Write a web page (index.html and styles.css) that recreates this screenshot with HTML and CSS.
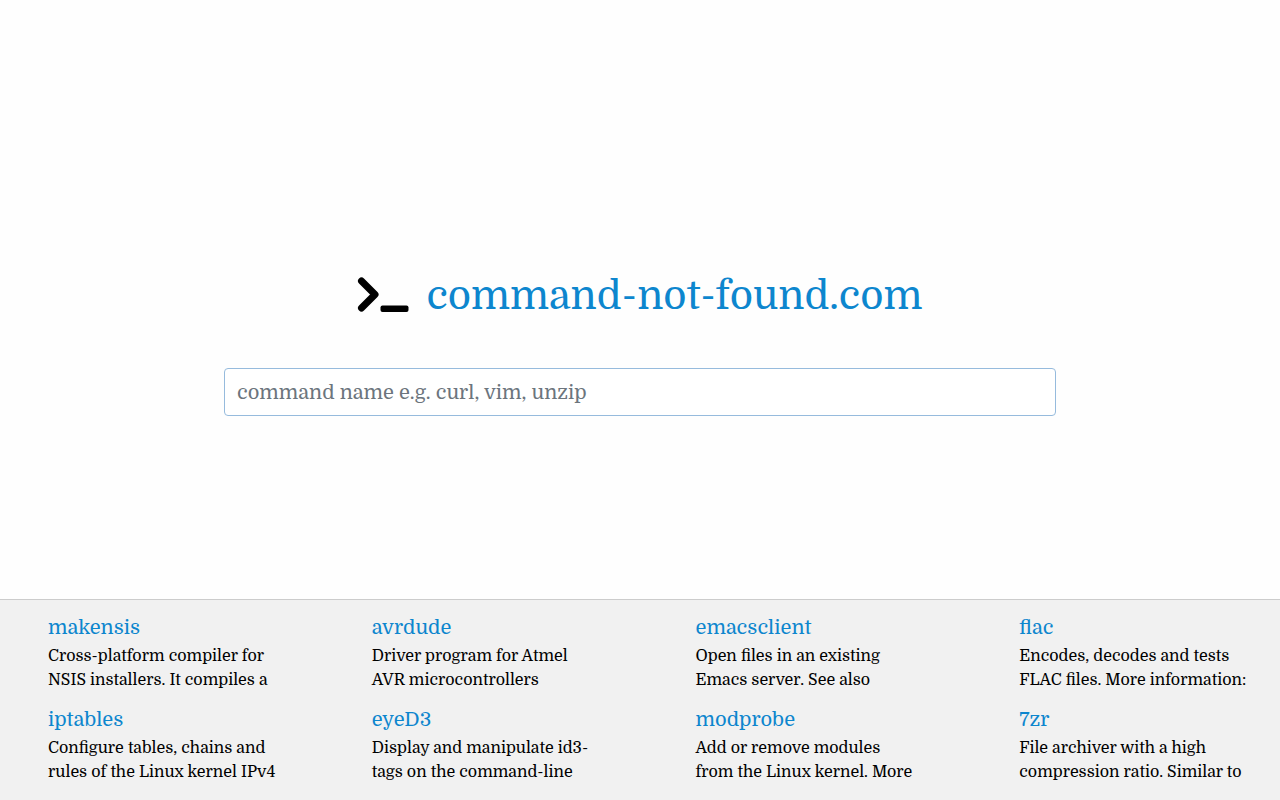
FILE: index.html
```html
<!DOCTYPE html>
<html lang="en">
<head>
<meta charset="utf-8">
<meta name="viewport" content="width=device-width, initial-scale=1">
<title>command-not-found.com</title>
<link rel="stylesheet" href="styles.css">
</head>
<body>
<main class="hero">
  <h1 class="brand">
    <svg class="brand-icon" viewBox="0 0 52 40" aria-hidden="true">
      <path d="M4.500 5L18 18.500L4.500 32" fill="none" stroke="#000" stroke-width="7" stroke-linecap="round" stroke-linejoin="round"/>
      <rect x="23.500" y="29.500" width="28" height="6.500" rx="2" fill="#000"/>
    </svg>
    <a class="brand-link" href="#">command-not-found.com</a>
  </h1>
  <form class="search">
    <input class="search-input" type="text" aria-label="Command name" placeholder="command name e.g. curl, vim, unzip">
  </form>
</main>
<footer class="commands">
  <article class="command"><h2 class="command-name"><a href="#">makensis</a></h2><p class="command-text">Cross-platform compiler for NSIS installers. It compiles a</p></article>
  <article class="command"><h2 class="command-name"><a href="#">avrdude</a></h2><p class="command-text">Driver program for Atmel AVR microcontrollers</p></article>
  <article class="command"><h2 class="command-name"><a href="#">emacsclient</a></h2><p class="command-text">Open files in an existing Emacs server. See also</p></article>
  <article class="command"><h2 class="command-name"><a href="#">flac</a></h2><p class="command-text">Encodes, decodes and tests FLAC files. More information:</p></article>
  <article class="command"><h2 class="command-name"><a href="#">iptables</a></h2><p class="command-text">Configure tables, chains and rules of the Linux kernel IPv4</p></article>
  <article class="command"><h2 class="command-name"><a href="#">eyeD3</a></h2><p class="command-text">Display and manipulate id3-tags on the command-line</p></article>
  <article class="command"><h2 class="command-name"><a href="#">modprobe</a></h2><p class="command-text">Add or remove modules<br>from the Linux kernel. More</p></article>
  <article class="command"><h2 class="command-name"><a href="#">7zr</a></h2><p class="command-text">File archiver with a high compression ratio. Similar to</p></article>
</footer>
</body>
</html>
```
FILE: styles.css
```css
* { box-sizing: border-box; }
body {
  display: flex;
  flex-direction: column;
  min-height: 100vh;
  margin: 0;
  background: #fefefe;
  color: #000;
  font-family: Domine, "Noto Serif", "Liberation Serif", serif;
  font-size: 16px;
  line-height: 24px;
}
a { color: #0d86ce; text-decoration: none; }
.hero {
  flex: 1;
  display: flex;
  flex-direction: column;
  align-items: center;
  justify-content: center;
  padding-top: 88px;
}
.brand {
  display: flex;
  align-items: center;
  gap: 17px;
  margin: 0 0 48px;
  font-size: 40px;
  font-weight: 400;
  line-height: 48px;
}
.brand-icon { width: 52px; height: 40px; }
.search { width: 65%; }
.search-input {
  display: block;
  width: 100%;
  height: 48px;
  padding: 9px 12px 7px;
  border: 1px solid #96bbdd;
  border-radius: 4px;
  background: #fff;
  color: #495057;
  font: inherit;
  font-size: 20px;
}
.search-input::placeholder { color: #6c757d; opacity: 1; }
.commands {
  display: grid;
  grid-template-columns: repeat(4, minmax(0, 1fr));
  gap: 16px 96px;
  padding: 16px 33px 16px 48px;
  border-top: 1px solid #ccc;
  background: #f1f1f1;
}
.command-name {
  margin: 0 0 4px;
  font-size: 20px;
  font-weight: 400;
  line-height: 24px;
}
.command-text { margin: 0; }
```
